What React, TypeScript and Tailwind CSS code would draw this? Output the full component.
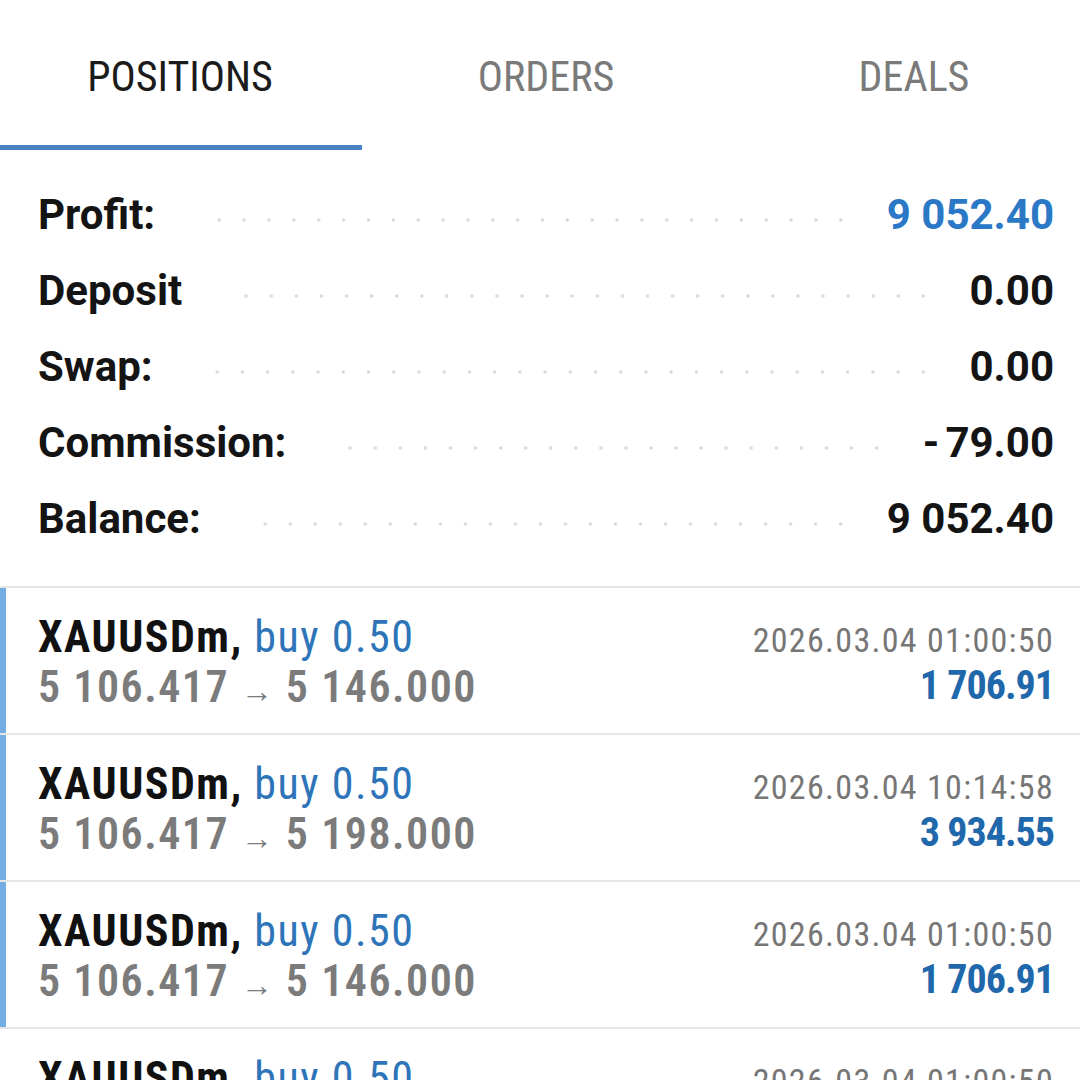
import React from 'react';

const summary = [
  { label: 'Profit:', value: '9 052.40', blue: true },
  { label: 'Deposit', value: '0.00', blue: false },
  { label: 'Swap:', value: '0.00', blue: false },
  { label: 'Commission:', value: '-79.00', blue: false },
  { label: 'Balance:', value: '9 052.40', blue: false },
];

const positions = [
  { close: '5 146.000', time: '2026.03.04 01:00:50', profit: '1 706.91', bar: true },
  { close: '5 198.000', time: '2026.03.04 10:14:58', profit: '3 934.55', bar: true },
  { close: '5 146.000', time: '2026.03.04 01:00:50', profit: '1 706.91', bar: true },
  { close: '5 146.000', time: '2026.03.04 01:00:50', profit: '1 706.91', bar: false },
];

const App = () => {
  return (
    <div className="w-[1080px] h-[1080px] overflow-hidden bg-white font-['Roboto',sans-serif]">
      {/* Tabs */}
      <div className="relative h-[150px] grid grid-cols-3">
        <div className="flex items-start justify-center pt-[52px] text-[42px] leading-[50px] font-stretch-condensed text-[#1b1b1b]">
          POSITIONS
        </div>
        <div className="flex items-start justify-center pt-[52px] pl-[12px] text-[42px] leading-[50px] font-stretch-condensed text-[#7a7a7a]">
          ORDERS
        </div>
        <div className="flex items-start justify-center pt-[52px] pl-[28px] text-[42px] leading-[50px] font-stretch-condensed text-[#7a7a7a]">
          DEALS
        </div>
        <div className="absolute left-0 bottom-0 w-[362px] h-[5px] bg-[#4a80c4]" />
      </div>

      {/* Summary */}
      <div className="pt-[27px] pb-[29px] pl-[38px] pr-[26px]">
        {summary.map((row) => (
          <div key={row.label} className="h-[76px] flex items-center">
            <span className="text-[42px] font-bold text-[#141414] leading-none">{row.label}</span>
            <div className="flex-1 h-[8px] mt-[10px] ml-[52px] mr-[34px] bg-[radial-gradient(circle,#dadada_1.4px,transparent_2px)] bg-[length:24.5px_8px] bg-repeat-space" />
            <span
              className={`text-[42px] font-bold leading-none ${row.blue ? 'text-[#2a78c6]' : 'text-[#141414]'}`}
            >
              {row.value.startsWith('-') ? (
                <>
                  <span className="mr-[6px]">-</span>
                  {row.value.slice(1)}
                </>
              ) : (
                row.value
              )}
            </span>
          </div>
        ))}
      </div>

      {/* Positions list */}
      <div className="border-t-2 border-[#e6e6e6]">
        {positions.map((p, i) => (
          <div key={i} className="h-[147px] flex border-b-2 border-[#e6e6e6]">
            <div className={`w-[6px] ${p.bar ? 'bg-[#74ace4]' : 'bg-white'}`} />
            <div className="flex-1 flex justify-between pl-[32px] pr-[26px] pt-[24px] font-stretch-condensed">
              <div className="flex flex-col">
                <div className="h-[50px] text-[44px] leading-[50px] tracking-[1.5px] whitespace-nowrap">
                  <span className="font-bold text-[#111111]">XAUUSDm,</span>
                  <span className="text-[#2e74b8]"> buy 0.50</span>
                </div>
                <div className="h-[50px] text-[44px] leading-[50px] tracking-[1.5px] font-semibold text-[#7b7b7b] whitespace-nowrap">
                  5 106.417 <span className="text-[32px]">→</span> {p.close}
                </div>
              </div>
              <div className="flex flex-col items-end">
                <div className="h-[53px] pt-[3px] text-[34px] leading-[50px] tracking-[1.3px] text-[#767676] whitespace-nowrap">
                  {p.time}
                </div>
                <div className="h-[42px] text-[40px] leading-[42px] font-bold tracking-[-1px] text-[#1f68ab] whitespace-nowrap">
                  {p.profit}
                </div>
              </div>
            </div>
          </div>
        ))}
      </div>
    </div>
  );
};

export default App;
